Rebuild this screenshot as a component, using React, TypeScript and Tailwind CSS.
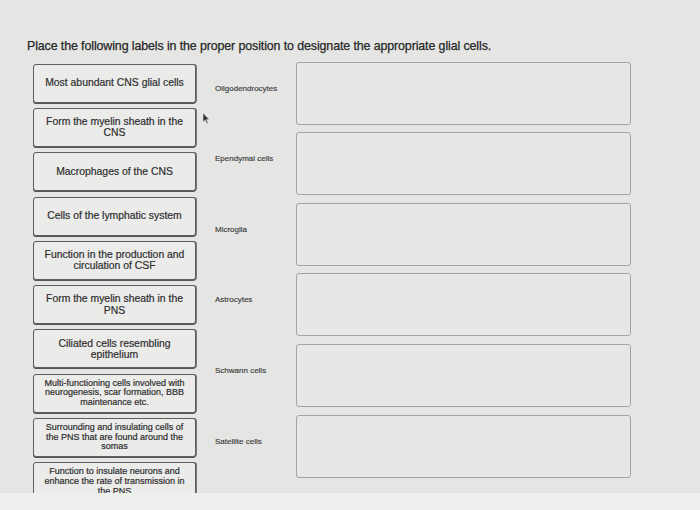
import React from "react";

const left: { t: string; size: string; px: string }[] = [
  { t: "Most abundant CNS glial cells", size: "text-[10.4px]", px: "px-[8px]" },
  { t: "Form the myelin sheath in the CNS", size: "text-[10.4px]", px: "px-[8px]" },
  { t: "Macrophages of the CNS", size: "text-[10.4px]", px: "px-[8px]" },
  { t: "Cells of the lymphatic system", size: "text-[10.4px]", px: "px-[8px]" },
  { t: "Function in the production and circulation of CSF", size: "text-[10.4px]", px: "px-[8px]" },
  { t: "Form the myelin sheath in the PNS", size: "text-[10.4px]", px: "px-[8px]" },
  { t: "Ciliated cells resembling epithelium", size: "text-[10.4px]", px: "px-[22px]" },
  { t: "Multi-functioning cells involved with neurogenesis, scar formation, BBB maintenance etc.", size: "text-[9px]", px: "px-[7px]" },
  { t: "Surrounding and insulating cells of the PNS that are found around the somas", size: "text-[9px]", px: "px-[7px]" },
  { t: "Function to insulate neurons and enhance the rate of transmission in the PNS", size: "text-[9px]", px: "px-[9px]" },
];

const right = [
  "Oligodendrocytes",
  "Ependymal cells",
  "Microglia",
  "Astrocytes",
  "Schwann cells",
  "Satellite cells",
];

export default function App() {
  return (
    <div
      className="w-[700px] h-[510px] bg-[#e5e6e4] relative overflow-hidden"
      style={{ fontFamily: '"Liberation Sans", Arial, sans-serif' }}
    >
      <div className="h-[493px] overflow-hidden">
        <div className="pt-[37px] pl-[27px] text-[12.4px] text-[#262626] tracking-[-0.1px] [-webkit-text-stroke:0.25px_#262626]">
          Place the following labels in the proper position to designate the appropriate glial cells.
        </div>
        <div className="flex mt-[8px]">
          <div className="ml-[33px] w-[163px] flex flex-col gap-[5.3px]">
            {left.map((b, i) => (
              <div
                key={i}
                className={`h-[39px] shrink-0 rounded-[3px] border border-[#5e5e5e] shadow-[0_1px_0_#555,1px_0_0_#777] bg-[#ebebea] flex items-center justify-center text-center leading-[1.08] text-[#2e2e2e] [-webkit-text-stroke:0.2px_#2e2e2e] ${b.px} ${b.size}`}
              >
                {b.t}
              </div>
            ))}
          </div>
          <div className="ml-[16px] flex flex-col gap-[7.6px] -mt-[2px]">
            {right.map((r, i) => (
              <div key={i} className="flex h-[63px]">
                <div className="w-[84px] pl-[3px] pt-[21px] text-[8px] text-[#3a3a3a] [-webkit-text-stroke:0.15px_#3a3a3a]">{r}</div>
                <div className="w-[335px] h-[63px] rounded-[3px] border border-[#a3a5a3] bg-[#e7e8e6]" />
              </div>
            ))}
          </div>
        </div>
      </div>
      <div className="h-[17px] bg-[#efefed]" />
      <svg
        className="absolute left-[202px] top-[112px]"
        width="8"
        height="12"
        viewBox="0 0 8 12"
      >
        <path d="M1 1 L1 10 L3.2 8 L4.8 11.5 L6 11 L4.5 7.6 L7.2 7.6 Z" fill="#333" stroke="#ddd" strokeWidth="0.6" />
      </svg>
    </div>
  );
}
